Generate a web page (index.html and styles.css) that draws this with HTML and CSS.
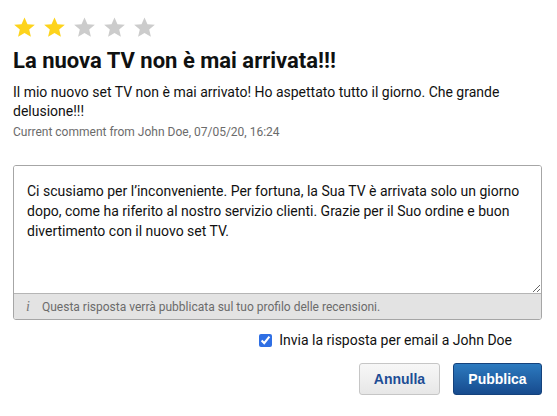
FILE: index.html
```html
<!DOCTYPE html>
<html lang="it">
<head>
<meta charset="utf-8">
<link rel="stylesheet" href="styles.css">
</head>
<body>
<div class="page">
  <div class="stars">
    <svg class="star on" viewBox="0 0 24 24"><path d="M12 1.5l3.1 7.1 7.7.6-5.9 5 1.8 7.5L12 17.8l-6.7 3.9 1.8-7.5-5.9-5 7.7-.6z"/></svg>
    <svg class="star on" viewBox="0 0 24 24"><path d="M12 1.5l3.1 7.1 7.7.6-5.9 5 1.8 7.5L12 17.8l-6.7 3.9 1.8-7.5-5.9-5 7.7-.6z"/></svg>
    <svg class="star" viewBox="0 0 24 24"><path d="M12 1.5l3.1 7.1 7.7.6-5.9 5 1.8 7.5L12 17.8l-6.7 3.9 1.8-7.5-5.9-5 7.7-.6z"/></svg>
    <svg class="star" viewBox="0 0 24 24"><path d="M12 1.5l3.1 7.1 7.7.6-5.9 5 1.8 7.5L12 17.8l-6.7 3.9 1.8-7.5-5.9-5 7.7-.6z"/></svg>
    <svg class="star" viewBox="0 0 24 24"><path d="M12 1.5l3.1 7.1 7.7.6-5.9 5 1.8 7.5L12 17.8l-6.7 3.9 1.8-7.5-5.9-5 7.7-.6z"/></svg>
  </div>
  <h1 class="title">La nuova TV non è mai arrivata!!!</h1>
  <p class="review">Il mio nuovo set TV non è mai arrivato! Ho aspettato tutto il giorno. Che grande delusione!!!</p>
  <p class="meta">Current comment from John Doe, 07/05/20, 16:24</p>

  <div class="reply">
    <textarea class="reply-text">Ci scusiamo per l’inconveniente. Per fortuna, la Sua TV è arrivata solo un giorno dopo, come ha riferito al nostro servizio clienti. Grazie per il Suo ordine e buon divertimento con il nuovo set TV.</textarea>
    <div class="reply-note"><span class="info">i</span>Questa risposta verrà pubblicata sul tuo profilo delle recensioni.</div>
  </div>

  <label class="notify"><input type="checkbox" checked>Invia la risposta per email a John Doe</label>

  <div class="actions">
    <button class="btn btn-secondary">Annulla</button>
    <button class="btn btn-primary">Pubblica</button>
  </div>
</div>
</body>
</html>
```

FILE: styles.css
```css
html, body {
  margin: 0;
  padding: 0;
  background: #ffffff;
}
body {
  font-family: Roboto, "Liberation Sans", sans-serif;
  color: #111111;
}
.page {
  width: 529px;
  padding: 16px 0 0 13px;
}
.stars {
  display: flex;
  gap: 7px;
  height: 23px;
}
.star {
  width: 23px;
  height: 23px;
  fill: #cccccc;
}
.star.on {
  fill: #fdd31c;
}
.title {
  margin: 9px 0 0;
  font-size: 22px;
  line-height: 26px;
  font-weight: 700;
  color: #0f1111;
}
.review {
  margin: 9px 0 0;
  font-size: 14px;
  line-height: 19px;
  color: #111111;
}
.meta {
  margin: 3px 0 0;
  font-size: 12px;
  line-height: 16px;
  color: #6b6b6b;
}
.reply {
  margin-top: 25px;
  border: 1px solid #a6a6a6;
  border-radius: 3px;
  overflow: hidden;
  display: flex;
  flex-direction: column;
}
.reply-text {
  display: block;
  box-sizing: border-box;
  width: 100%;
  height: 128px;
  margin: 0;
  padding: 15px 13px 12px;
  border: none;
  border-bottom: 1px solid #b5b5b5;
  font-family: Roboto, "Liberation Sans", sans-serif;
  font-size: 14px;
  line-height: 20px;
  color: #111111;
  resize: vertical;
  outline: none;
}
.reply-note {
  display: flex;
  align-items: center;
  height: 25px;
  background: #e3e3e3;
  font-size: 12px;
  color: #6b6b6b;
  padding-left: 12px;
}
.info {
  font-family: "Liberation Serif", serif;
  font-style: italic;
  font-size: 14px;
  color: #777777;
  width: 16px;
}
.notify {
  display: flex;
  align-items: center;
  justify-content: flex-end;
  margin-top: 12px;
  padding-right: 30px;
  font-size: 14px;
  color: #111111;
}
.notify input {
  width: 13px;
  height: 13px;
  margin: 0 7px 0 0;
  accent-color: #2f6fe4;
}
.actions {
  display: flex;
  justify-content: flex-end;
  gap: 13px;
  margin-top: 15px;
}
.btn {
  height: 32px;
  border-radius: 3px;
  font-family: "Liberation Sans", Arial, sans-serif;
  font-weight: 700;
  font-size: 14px;
  padding: 0;
}
.btn-secondary {
  width: 81px;
  color: #1d4d95;
  background: linear-gradient(#f7f7f7, #e7e7e7);
  border: 1px solid #c6c6c6;
}
.btn-primary {
  width: 89px;
  color: #ffffff;
  background: linear-gradient(#2c7abf, #174b8e);
  border: 1px solid #15427c;
}
```
